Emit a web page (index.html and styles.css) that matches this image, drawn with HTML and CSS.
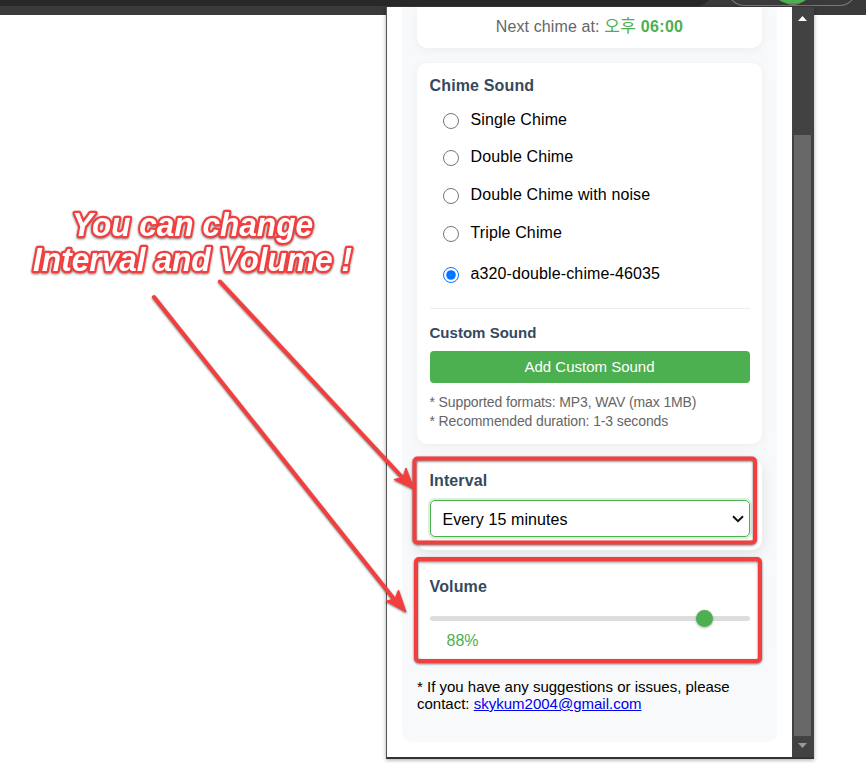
FILE: index.html
```html
<!DOCTYPE html>
<html lang="en">
<head>
<meta charset="utf-8">
<title>Chime settings</title>
<link rel="stylesheet" href="styles.css">
</head>
<body>
<header class="browser-bar">
  <svg width="866" height="15" viewBox="0 0 866 15">
    <path d="M0 0H709Q704 6 696 6H0Z" fill="#282828"/>
    <rect x="729" y="-24" width="126" height="29.5" rx="14.7" fill="#3a3a3a" stroke="#777" stroke-width="1.2"/>
    <circle cx="793" cy="-12" r="17" fill="#777"/>
    <path d="M779 0H806Q802 3 798 3H787Q783 3 779 0Z" fill="#4caf50"/>
  </svg>
</header>
<main class="popup">
  <div class="viewport">
    <div class="panel">
      <section class="card next">Next chime at: <b><span class="meridiem">오후</span> 06:00</b></section>
      <section class="card sounds">
        <h2>Chime Sound</h2>
        <label class="option"><input type="radio" name="s"><span>Single Chime</span></label>
        <label class="option"><input type="radio" name="s"><span>Double Chime</span></label>
        <label class="option"><input type="radio" name="s"><span>Double Chime with noise</span></label>
        <label class="option"><input type="radio" name="s"><span>Triple Chime</span></label>
        <label class="option custom"><input type="radio" name="s" checked><span>a320-double-chime-46035</span></label>
        <div class="upload">
          <h3>Custom Sound</h3>
          <button class="add">Add Custom Sound</button>
          <p class="hint">* Supported formats: MP3, WAV (max 1MB)<br>* Recommended duration: 1-3 seconds</p>
        </div>
      </section>
      <section class="card interval">
        <h2>Interval</h2>
        <div class="select"><span>Every 15 minutes</span>
          <svg width="12" height="8" viewBox="0 0 12 8"><path d="M1 1.2L6 6.2L11 1.2" fill="none" stroke="#111" stroke-width="2"/></svg>
        </div>
      </section>
      <section class="card volume">
        <h2>Volume</h2>
        <div class="track"><i class="thumb"></i></div>
        <div class="value">88%</div>
      </section>
      <p class="contact">* If you have any suggestions or issues, please<br>contact: <a href="#">skykum2004@gmail.com</a></p>
    </div>
  </div>
  <div class="scrollbar">
    <svg width="22" height="128" viewBox="0 0 22 128"><path d="M6 14L10.500 9L15 14Z" fill="#fff"/></svg>
    <div class="scroll-thumb"></div>
    <svg width="22" height="21" viewBox="0 0 22 21"><path d="M6 7L10.500 12L15 7Z" fill="#999"/></svg>
  </div>
</main>
<svg class="annotations" width="866" height="763" viewBox="0 0 866 763">
  <g class="marks">
    <rect x="414.500" y="458.500" width="340.500" height="84" rx="3"/>
    <rect x="416" y="559" width="344" height="102" rx="3"/>
    <path d="M220 281.500L402 477M154 297L394 599" stroke-linecap="round"/>
    <path class="head" d="M414 489L394 479.500L403 477.500L406 468Z M406 612L386 601L395 599L398.500 590Z"/>
  </g>
  <g class="note">
    <text x="72" y="235.500" textLength="241" lengthAdjust="spacingAndGlyphs">You can change</text>
    <text x="33" y="270.500" textLength="319" lengthAdjust="spacingAndGlyphs">Interval and Volume !</text>
  </g>
</svg>
</body>
</html>
```
FILE: styles.css
```css
* { box-sizing: border-box; }
body { margin: 0; height: 763px; overflow: hidden; background: #fff; font-family: "Liberation Sans", "Noto Sans CJK KR", sans-serif; font-size: 16px; }
.browser-bar { height: 15px; background: #3a3a3a; }
.browser-bar svg { display: block; }
.popup { position: absolute; left: 386px; top: 7px; width: 428px; height: 752px; display: flex; background: #fff; border-left: 1px solid #555; border-bottom: 2px solid #333; box-shadow: 0 1px 4px rgba(0,0,0,.35); }
.viewport { flex: 1; overflow: hidden; padding: 0 15px; }
.panel { height: 735px; padding: 0 15px; background: #f7f9fb; border-radius: 0 0 10px 10px; }
.card { background: #fff; border-radius: 10px; box-shadow: 0 2px 10px rgba(0,0,0,.05); padding: 0 12.500px; margin-bottom: 15px; }
h2, h3 { margin: 0; color: #34495e; font-weight: bold; }
h2 { font-size: 16px; line-height: 20px; letter-spacing: .15px; }
h3 { font-size: 15px; line-height: 20px; letter-spacing: .02px; }
.next { height: 41px; border-radius: 0 0 10px 10px; text-align: center; line-height: 39px; color: #666; letter-spacing: .12px; }
.next b { color: #4caf50; letter-spacing: .3px; }
.meridiem { font-weight: 400; font-size: 17px; line-height: 1; }
.sounds { height: 381px; padding-top: 13px; }
.option { display: flex; align-items: center; height: 37.600px; padding-left: 13px; }
.sounds h2 { margin-bottom: 5px; }
.option input { width: 16px; height: 16px; margin: 2px 12px 0 0; accent-color: #0075ff; }
.option span { letter-spacing: .12px; }
.custom { height: 46px; }
.upload { margin-top: 11px; border-top: 1px solid #eee; padding-top: 14px; }
.add { display: block; width: 100%; height: 32px; margin: 8px 0 10px; padding: 0 0 2px; border: 0; border-radius: 4px; background: #4caf50; color: #fff; font: 15px "Liberation Sans", sans-serif; }
.hint { margin: 0; color: #666; font-size: 14px; line-height: 19px; letter-spacing: -.12px; }
.interval { height: 91px; padding-top: 12px; margin-bottom: 15px; box-shadow: 0 4px 15px rgba(0,0,0,.1); }
.interval h2 { letter-spacing: .1px; }
.select { display: flex; align-items: center; justify-content: space-between; height: 37px; margin-top: 9px; padding: 1px 5px 0 12px; border: 1px solid #4caf50; border-radius: 5px; box-shadow: 0 0 0 2px rgba(76,175,80,.2); letter-spacing: .1px; }
.select span { padding-top: 2px; }
.volume { height: 95px; padding-top: 12px; }
.track { height: 5px; margin-top: 19px; border-radius: 3px; background: #ddd; display: flex; align-items: center; padding-left: 266px; }
.thumb { width: 17px; height: 17px; border-radius: 50%; background: #4caf50; box-shadow: 0 1px 3px rgba(0,0,0,.3); }
.value { margin: 11px 0 0 17px; color: #4caf50; line-height: 18px; }
.contact { margin: 0; padding-top: 3px; font-size: 15px; line-height: 17px; }
a { color: #00e; }
.scrollbar { width: 22px; background: #424242; }
.scrollbar svg { display: block; }
.scroll-thumb { height: 601px; margin: 0 3px 0 2px; background: #686868; }
.annotations { position: absolute; left: 0; top: 0; pointer-events: none; }
.marks { fill: none; stroke: #f43d3d; stroke-width: 4; filter: drop-shadow(0 1px 1px rgba(0,0,0,.55)); }
.marks .head { fill: #f43d3d; stroke-width: 1; }
.note { font: italic bold 33px "Liberation Sans", sans-serif; fill: #fff; stroke: #f43d3d; stroke-width: 4.500; stroke-linejoin: round; paint-order: stroke; filter: drop-shadow(0 1px 1px rgba(0,0,0,.5)); }
```
